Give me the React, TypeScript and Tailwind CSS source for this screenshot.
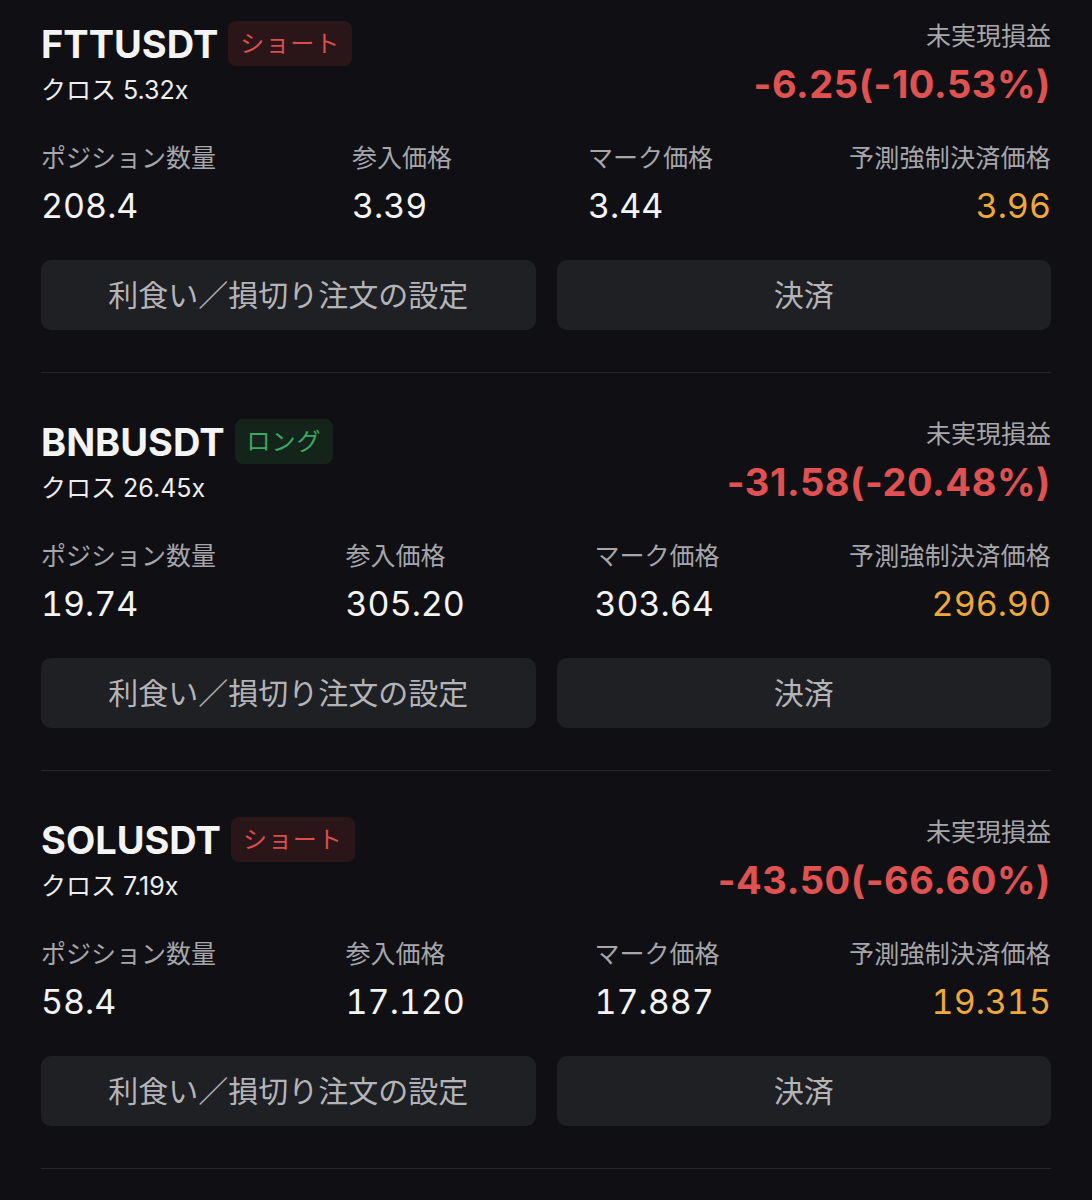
import React from 'react';

type Position = {
  symbol: string;
  side: 'short' | 'long';
  leverage: string;
  pnl: string;
  size: string;
  entry: string;
  mark: string;
  liq: string;
};

const positions: Position[] = [
  { symbol: 'FTTUSDT', side: 'short', leverage: '5.32x', pnl: '-6.25(-10.53%)', size: '208.4', entry: '3.39', mark: '3.44', liq: '3.96' },
  { symbol: 'BNBUSDT', side: 'long', leverage: '26.45x', pnl: '-31.58(-20.48%)', size: '19.74', entry: '305.20', mark: '303.64', liq: '296.90' },
  { symbol: 'SOLUSDT', side: 'short', leverage: '7.19x', pnl: '-43.50(-66.60%)', size: '58.4', entry: '17.120', mark: '17.887', liq: '19.315' },
];

const PositionCard = ({ p, first }: { p: Position; first: boolean }) => {
  return (
    <div className={first ? 'pt-[21px]' : 'pt-[46px]'}>
      {/* header */}
      <div className="flex justify-between items-start">
        <div>
          <div className="flex items-center gap-[10px] h-[45px]">
            <span className="text-[38px] font-bold leading-none text-[#f4f4f5]">{p.symbol}</span>
            {p.side === 'short' ? (
              <span className="h-[45px] px-[12px] flex items-center rounded-[8px] bg-[#2a1618] text-[#dc4e4e] text-[24px] tracking-[0.04em]">
                ショート
              </span>
            ) : (
              <span className="h-[45px] px-[12px] flex items-center rounded-[8px] bg-[#14241b] text-[#3aa862] text-[24px] tracking-[0.04em]">
                ロング
              </span>
            )}
          </div>
          <div className="mt-[9px] text-[25px] leading-[30px] text-[#ededee]">クロス {p.leverage}</div>
        </div>
        <div className="text-right">
          <div className="text-[25px] leading-[30px] text-[#a6a6ab]">未実現損益</div>
          <div className="mt-[11px] text-[38px] leading-[44px] font-bold text-[#e05252] tracking-[0.015em]">{p.pnl}</div>
        </div>
      </div>

      {/* stats */}
      <div className="mt-[35px] flex justify-between">
        <div>
          <div className="text-[25px] leading-[34px] text-[#a6a6ab]">ポジション数量</div>
          <div className="mt-[9px] text-[34px] leading-[44px] text-[#f4f4f5] tabular-nums">{p.size}</div>
        </div>
        <div>
          <div className="text-[25px] leading-[34px] text-[#a6a6ab]">参入価格</div>
          <div className="mt-[9px] text-[34px] leading-[44px] text-[#f4f4f5] tabular-nums">{p.entry}</div>
        </div>
        <div>
          <div className="text-[25px] leading-[34px] text-[#a6a6ab]">マーク価格</div>
          <div className="mt-[9px] text-[34px] leading-[44px] text-[#f4f4f5] tabular-nums">{p.mark}</div>
        </div>
        <div className="text-right">
          <div className="text-[25px] leading-[34px] text-[#a6a6ab] tracking-[0.01em]">予測強制決済価格</div>
          <div className="mt-[9px] text-[34px] leading-[44px] text-[#eea83c] tabular-nums">{p.liq}</div>
        </div>
      </div>

      {/* actions */}
      <div className="mt-[32px] grid grid-cols-2 gap-[21px]">
        <button className="h-[70px] rounded-[10px] bg-[#1f2024] text-[30px] text-[#b4b4b8]">
          利食い／損切り注文の設定
        </button>
        <button className="h-[70px] rounded-[10px] bg-[#1f2024] text-[30px] text-[#b4b4b8]">決済</button>
      </div>

      <div className="mt-[42px] h-px bg-[#26262b]" />
    </div>
  );
};

const App = () => {
  return (
    <div className="min-h-screen w-full bg-[#101014] px-[41px] pb-10 font-['Inter','Noto_Sans_CJK_JP',sans-serif]">
      {positions.map((p, i) => (
        <PositionCard key={p.symbol} p={p} first={i === 0} />
      ))}
    </div>
  );
};

export default App;
